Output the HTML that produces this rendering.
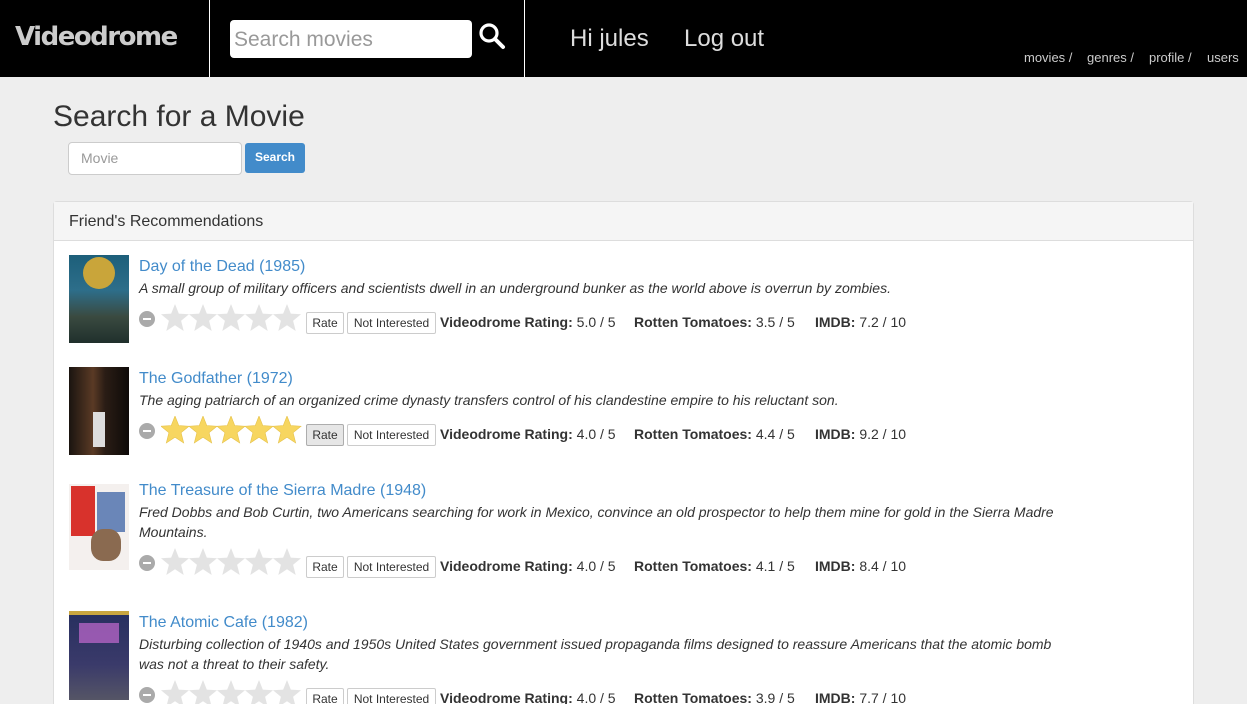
<!DOCTYPE html>
<html style="width:1247px;height:704px;overflow:hidden"><head><meta charset="utf-8"><style>
body{margin:0;width:1247px;height:704px;overflow:hidden;background:#eee;font-family:"Liberation Sans",Arial,sans-serif;color:#333;position:relative}
.a{position:absolute;white-space:nowrap}
#nav{position:absolute;left:0;top:0;width:1247px;height:77px;background:#000}
.logo{left:15px;top:22px;font-size:26px;font-weight:bold;color:#ccc;letter-spacing:-1.5px;font-family:"DejaVu Sans","Liberation Sans",sans-serif}
.vl{position:absolute;top:0;width:1px;height:77px;background:#fff}
.sbox{left:230px;top:20px;width:242px;height:38px;background:#fff;border-radius:4px}
.sbox span{position:absolute;left:4px;top:8px;font-size:21px;color:#999}
.nl{font-size:24px;color:#ddd;top:25px}
.sm{font-size:13px;color:#ccc;top:50px}
h1{position:absolute;left:53px;top:100px;margin:0;font-size:30px;font-weight:normal;color:#333}
.inp{left:68px;top:142px;width:172px;height:31px;background:#fff;border:1px solid #ccc;border-radius:4px}
.inp span{position:absolute;left:12px;top:7px;font-size:14px;color:#999}
.btn{left:245px;top:143px;width:60px;height:30px;background:#428bca;border-radius:3px;color:#fff;font-size:12px;font-weight:bold;text-align:center;line-height:29px}
.panel{left:53px;top:201px;width:1139px;height:520px;background:#fff;border:1px solid #ddd;border-radius:4px}
.ph{position:absolute;left:0;top:0;width:1139px;height:38px;background:#f5f5f5;border-bottom:1px solid #ddd}
.ph span{position:absolute;left:15px;top:11px;font-size:16px;color:#333}
.t{font-size:16px;color:#428bca}
.d{font-size:14px;font-style:italic;color:#333;line-height:20px}
.b{height:20px;border:1px solid #ccc;border-radius:2px;background:#fff;font-size:12px;line-height:20px;text-align:center;color:#333}
.r{font-size:14px;color:#333}
.r b{font-weight:bold}
.minus{width:16px;height:16px;border-radius:50%;background:#aaa}
.minus:after{content:"";position:absolute;left:4px;top:7px;width:8px;height:2px;background:#fff}
</style></head><body>
<div id="nav">
<div class="a logo">Videodrome</div>
<div class="vl" style="left:209px"></div>
<div class="vl" style="left:524px"></div>
<div class="a sbox"><span>Search movies</span></div>
<svg class="a" style="left:478px;top:22px" width="28" height="28" viewBox="0 0 28 28"><circle cx="11" cy="11" r="8" fill="none" stroke="#fff" stroke-width="3.2"/><path d="M17 17 L25 25" stroke="#fff" stroke-width="4" stroke-linecap="round"/></svg>
<div class="a nl" style="left:570px">Hi jules</div>
<div class="a nl" style="left:684px">Log out</div>
<div class="a sm" style="left:1024px">movies /</div>
<div class="a sm" style="left:1087px">genres /</div>
<div class="a sm" style="left:1149px">profile /</div>
<div class="a sm" style="left:1207px">users</div>
</div>
<h1>Search for a Movie</h1>
<div class="a inp"><span>Movie</span></div>
<div class="a btn">Search</div>
<div class="a panel"><div class="ph"><span>Friend's Recommendations</span></div></div>

<svg width="0" height="0" style="position:absolute"><defs><path id="st" d="M14 0 L17.8 9.6 L28 10.2 L20.1 16.7 L22.7 27 L14 21.2 L5.3 27 L7.9 16.7 L0 10.2 L10.2 9.6 Z"/></defs></svg>

<!-- row 1 -->
<div class="a" style="left:69px;top:255px;width:60px;height:88px;background:linear-gradient(#1d5f7a,#2d6e8a 40%,#3a4a40 70%,#20302c)"><div style="position:absolute;left:14px;top:2px;width:32px;height:32px;border-radius:50%;background:#c9a53a"></div></div>
<div class="a t" style="left:139px;top:258px">Day of the Dead (1985)</div>
<div class="a d" style="left:139px;top:278px">A small group of military officers and scientists dwell in an underground bunker as the world above is overrun by zombies.</div>
<div class="a minus" style="left:139px;top:311px"></div>
<svg class="a" style="left:161px;top:304px" width="141" height="30"><g fill="#e3e3e3"><use href="#st" x="0"/><use href="#st" x="28"/><use href="#st" x="56"/><use href="#st" x="84"/><use href="#st" x="112"/></g></svg>
<div class="a b" style="left:306px;top:312px;width:36px">Rate</div>
<div class="a b" style="left:347px;top:312px;width:87px">Not Interested</div>
<div class="a r" style="left:440px;top:314px"><b>Videodrome Rating:</b> 5.0 / 5</div>
<div class="a r" style="left:634px;top:314px"><b>Rotten Tomatoes:</b> 3.5 / 5</div>
<div class="a r" style="left:815px;top:314px"><b>IMDB:</b> 7.2 / 10</div>

<!-- row 2 -->
<div class="a" style="left:69px;top:367px;width:60px;height:88px;background:linear-gradient(90deg,#1a1410,#5a3a25 40%,#2a1d15 60%,#0e0a08)"><div style="position:absolute;left:24px;top:45px;width:12px;height:35px;background:#ddd"></div></div>
<div class="a t" style="left:139px;top:370px">The Godfather (1972)</div>
<div class="a d" style="left:139px;top:390px">The aging patriarch of an organized crime dynasty transfers control of his clandestine empire to his reluctant son.</div>
<div class="a minus" style="left:139px;top:423px"></div>
<svg class="a" style="left:161px;top:416px" width="141" height="30"><g fill="#f7d660" stroke="#e6c24a" stroke-width="0.6"><use href="#st" x="0"/><use href="#st" x="28"/><use href="#st" x="56"/><use href="#st" x="84"/><use href="#st" x="112"/></g></svg>
<div class="a b" style="left:306px;top:424px;width:36px;background:#e6e6e6;border-color:#adadad">Rate</div>
<div class="a b" style="left:347px;top:424px;width:87px">Not Interested</div>
<div class="a r" style="left:440px;top:426px"><b>Videodrome Rating:</b> 4.0 / 5</div>
<div class="a r" style="left:634px;top:426px"><b>Rotten Tomatoes:</b> 4.4 / 5</div>
<div class="a r" style="left:815px;top:426px"><b>IMDB:</b> 9.2 / 10</div>

<!-- row 3 -->
<div class="a" style="left:69px;top:484px;width:60px;height:86px;background:#f4f0ee"><div style="position:absolute;left:2px;top:2px;width:24px;height:50px;background:#d8322c"></div><div style="position:absolute;left:28px;top:8px;width:28px;height:40px;background:#6a86b8"></div><div style="position:absolute;left:22px;top:45px;width:30px;height:32px;background:#8a6a50;border-radius:40%"></div></div>
<div class="a t" style="left:139px;top:482px">The Treasure of the Sierra Madre (1948)</div>
<div class="a d" style="left:139px;top:502px;white-space:normal;width:940px">Fred Dobbs and Bob Curtin, two Americans searching for work in Mexico, convince an old prospector to help them mine for gold in the Sierra Madre Mountains.</div>
<div class="a minus" style="left:139px;top:555px"></div>
<svg class="a" style="left:161px;top:548px" width="141" height="30"><g fill="#e3e3e3"><use href="#st" x="0"/><use href="#st" x="28"/><use href="#st" x="56"/><use href="#st" x="84"/><use href="#st" x="112"/></g></svg>
<div class="a b" style="left:306px;top:556px;width:36px">Rate</div>
<div class="a b" style="left:347px;top:556px;width:87px">Not Interested</div>
<div class="a r" style="left:440px;top:558px"><b>Videodrome Rating:</b> 4.0 / 5</div>
<div class="a r" style="left:634px;top:558px"><b>Rotten Tomatoes:</b> 4.1 / 5</div>
<div class="a r" style="left:815px;top:558px"><b>IMDB:</b> 8.4 / 10</div>

<!-- row 4 -->
<div class="a" style="left:69px;top:611px;width:60px;height:89px;background:linear-gradient(#c9a640 0,#c9a640 4px,#283060 4px,#3a3a6a 60%,#556 100%)"><div style="position:absolute;left:10px;top:12px;width:40px;height:20px;background:#c36ad0;opacity:.7"></div></div>
<div class="a t" style="left:139px;top:614px">The Atomic Cafe (1982)</div>
<div class="a d" style="left:139px;top:634px;white-space:normal;width:940px">Disturbing collection of 1940s and 1950s United States government issued propaganda films designed to reassure Americans that the atomic bomb was not a threat to their safety.</div>
<div class="a minus" style="left:139px;top:687px"></div>
<svg class="a" style="left:161px;top:680px" width="141" height="30"><g fill="#e3e3e3"><use href="#st" x="0"/><use href="#st" x="28"/><use href="#st" x="56"/><use href="#st" x="84"/><use href="#st" x="112"/></g></svg>
<div class="a b" style="left:306px;top:688px;width:36px">Rate</div>
<div class="a b" style="left:347px;top:688px;width:87px">Not Interested</div>
<div class="a r" style="left:440px;top:690px"><b>Videodrome Rating:</b> 4.0 / 5</div>
<div class="a r" style="left:634px;top:690px"><b>Rotten Tomatoes:</b> 3.9 / 5</div>
<div class="a r" style="left:815px;top:690px"><b>IMDB:</b> 7.7 / 10</div>
</body></html>
